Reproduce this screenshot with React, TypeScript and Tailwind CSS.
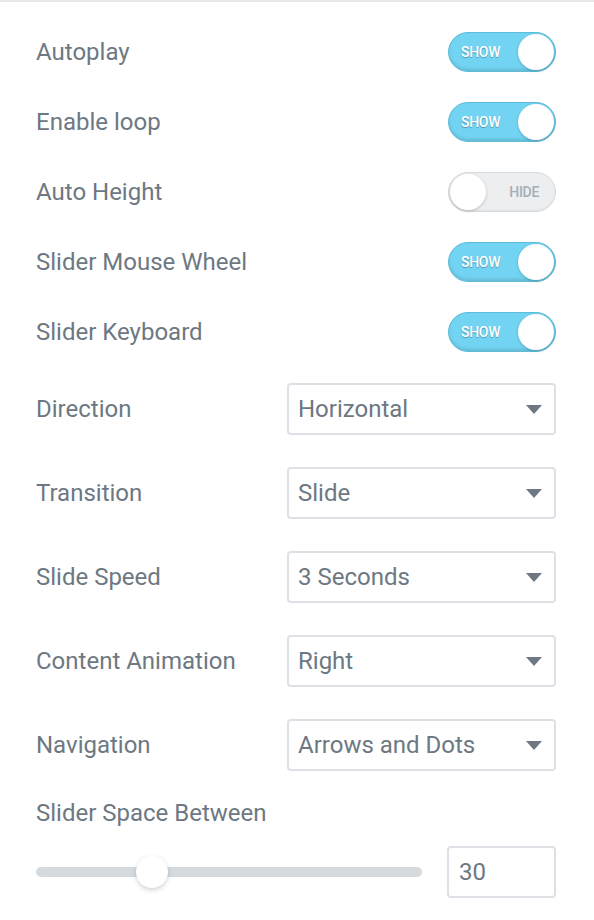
const switches = [
  { label: "Autoplay", on: true },
  { label: "Enable loop", on: true },
  { label: "Auto Height", on: false },
  { label: "Slider Mouse Wheel", on: true },
  { label: "Slider Keyboard", on: true },
];

const selects = [
  { label: "Direction", value: "Horizontal" },
  { label: "Transition", value: "Slide" },
  { label: "Slide Speed", value: "3 Seconds" },
  { label: "Content Animation", value: "Right" },
  { label: "Navigation", value: "Arrows and Dots" },
];

function Toggle({ on }: { on: boolean }) {
  if (on) {
    return (
      <div className="flex h-[40px] w-[108px] items-center justify-between rounded-full border border-[#5fbcd9] bg-[#72d4f2] pl-[12px] pr-[1px] shadow-[inset_0_-2px_3px_rgba(0,0,0,0.12)]">
        <span className="text-[14px] font-medium tracking-[-0.3px] text-white [text-shadow:0_1px_1px_rgba(0,0,0,0.3)]">
          SHOW
        </span>
        <span className="h-[36px] w-[36px] rounded-full bg-white shadow-[0_1px_3px_rgba(0,0,0,0.2)]" />
      </div>
    );
  }
  return (
    <div className="flex h-[40px] w-[108px] items-center justify-between rounded-full border border-[#d5dadf] bg-[#eceeef] pl-[1px] pr-[16px] shadow-[inset_0_-1px_2px_rgba(0,0,0,0.06)]">
      <span className="h-[36px] w-[36px] rounded-full bg-white shadow-[0_1px_3px_rgba(0,0,0,0.2)]" />
      <span className="text-[14px] font-medium tracking-[-0.3px] text-[#a4afb7]">HIDE</span>
    </div>
  );
}

export default function App() {
  return (
    <div className="min-h-[920px] w-[594px] border-t-2 border-[#e6e9ec] bg-white font-['Roboto',sans-serif] text-[24px] text-[#6d7882]">
      <div className="flex flex-col pl-[36px] pr-[38px] pt-[30px]">
        {switches.map((s) => (
          <div key={s.label} className="flex h-[70px] items-start justify-between">
            <span className="mt-[6px] leading-[28px]">{s.label}</span>
            <Toggle on={s.on} />
          </div>
        ))}

        <div className="mt-[1px] flex flex-col gap-[32px]">
          {selects.map((s) => (
            <div key={s.label} className="flex h-[52px] items-center justify-between">
              <span className="leading-[28px]">{s.label}</span>
              <div className="flex h-[52px] w-[269px] items-center justify-between rounded-[4px] border-2 border-[#dde1e5] pl-[9px] pr-[12px]">
                <span className="leading-[28px]">{s.value}</span>
                <svg width="16" height="9" viewBox="0 0 16 9">
                  <path d="M0 0 L16 0 L8 9 Z" fill="#6d7882" />
                </svg>
              </div>
            </div>
          ))}
        </div>

        <div className="mt-[28px] leading-[28px]">Slider Space Between</div>

        <div className="mt-[19px] flex items-center justify-between">
          <div className="relative h-[10px] w-[386px] rounded-full bg-[#d5dadf]">
            <span className="absolute left-[100px] top-[-11px] h-[32px] w-[32px] rounded-full bg-white shadow-[0_2px_5px_rgba(0,0,0,0.18)]" />
          </div>
          <div className="flex h-[52px] w-[109px] items-center rounded-[4px] border-2 border-[#dde1e5] pl-[10px]">
            30
          </div>
        </div>
      </div>
    </div>
  );
}
